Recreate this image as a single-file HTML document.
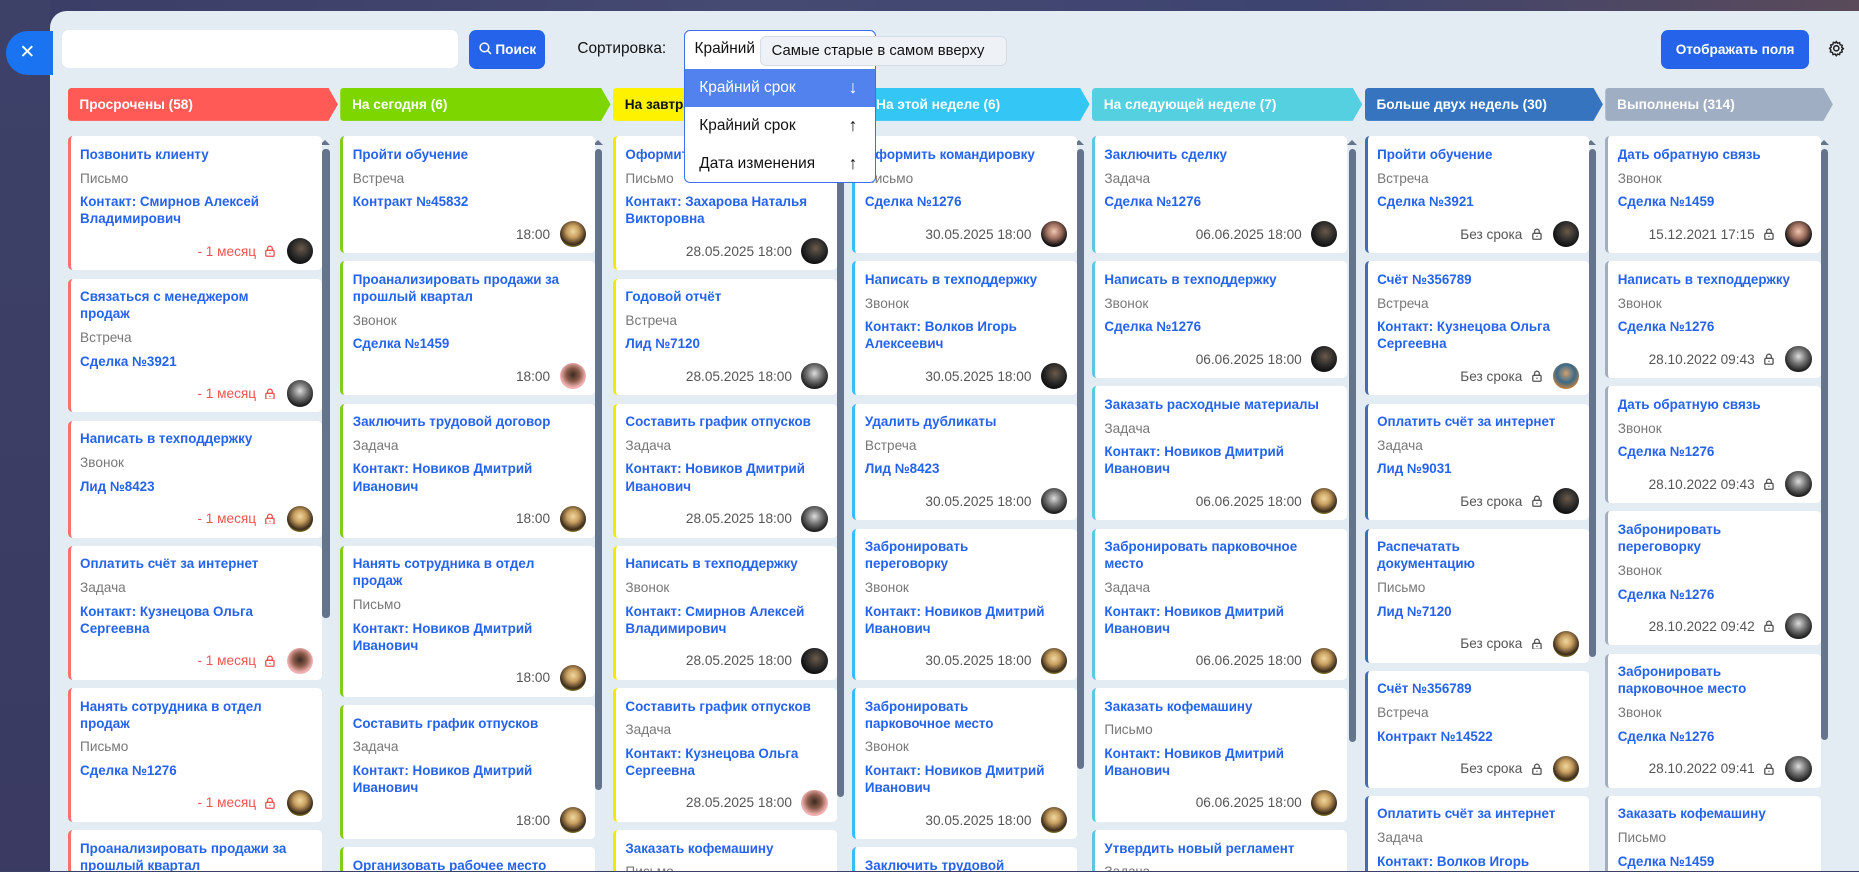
<!DOCTYPE html>
<html><head><meta charset="utf-8">
<style>
*{box-sizing:border-box;margin:0;padding:0}
html,body{width:1859px;height:872px;overflow:hidden;background:#3c4069}
body{font-family:"Liberation Sans","Noto Sans CJK SC",sans-serif}
.z{position:relative;width:1568px;height:735px;zoom:1.1856;overflow:hidden;background:linear-gradient(90deg,#3a3d66,#454a72 40%,#3d4470 70%,#5a4a5a)}
.lstrip{position:absolute;left:0;top:0;width:42px;height:735px;background:linear-gradient(180deg,#3d4168,#3a3a62)}
.panel{position:absolute;left:42px;top:9px;right:0;bottom:0;background:#e4ecf3;border-radius:14px 0 0 0;overflow:hidden}
.close{position:absolute;left:5px;top:26px;width:40px;height:37px;background:#1a73f0;border-radius:19px 0 0 19px;color:#fff;font-size:16px;line-height:37px;text-align:center;padding-right:4px;z-index:2}
.search{position:absolute;left:10px;top:16px;width:334px;height:32px;background:#fff;border-radius:6px}
.btn{position:absolute;height:33px;background:#2563eb;border-radius:6px;color:#fff;font-weight:bold;font-size:11.5px;line-height:33px;text-align:center}
.sortl{position:absolute;left:445px;top:25px;font-size:13px;color:#111}
.sel{position:absolute;left:535px;top:16px;width:162px;height:34px;background:#fff;border:1px solid #3b6ff0;border-radius:5px 5px 0 0;font-size:13px;line-height:31px;padding-left:8px;color:#111}
.tip{position:absolute;left:599px;top:21px;width:208px;height:26px;background:#eef2f7;border:1px solid #d5dce6;border-radius:5px;font-size:12.5px;line-height:24px;padding-left:9px;color:#111}
.dd{position:absolute;left:535px;top:49px;width:162px;height:96px;background:#fff;border:1px solid #3b6ff0;border-top:none;border-radius:0 0 5px 5px;z-index:5;overflow:hidden}
.dd div{height:32px;line-height:32px;padding-left:12px;font-size:13px;color:#111;position:relative}
.dd div span{position:absolute;right:15px;top:0;font-size:15px}
.dd .on{background:#5282ee;color:#fff}
.hd{position:absolute;top:65px;height:28px;font-size:11.5px;font-weight:bold;color:#fff;line-height:28px;padding-left:10px;clip-path:polygon(0 0,calc(100% - 8px) 0,100% 50%,calc(100% - 8px) 100%,0 100%);border-radius:3px}
.col{position:absolute;top:106px}
.c{background:#fff;border-radius:4px;border-left:3px solid;padding:8px 8px 5px 8px;margin-bottom:7px;font-size:11.5px}
.t,.l{color:#2563eb;font-weight:bold;line-height:14.5px;margin-bottom:5.5px;font-size:11.3px}
.ty{color:#777;line-height:15px;margin-bottom:5px}
.c>.l:last-child{margin-bottom:3px}
.f{height:22px;display:flex;justify-content:flex-end;align-items:center;color:#555;margin-top:9px;font-size:11.5px}
.f .lk{width:10px;height:10px;margin:0 9px 0 7px}
.av{width:22px;height:22px;border-radius:50%;margin-left:8px;background:radial-gradient(circle at 55% 40%,#6b5a4a 0,#2a2a2a 45%,#111 70%)}
.f .lk+.av{margin-left:0}
.a2{background:radial-gradient(circle at 50% 40%,#f0d8a0 0,#c9a060 30%,#3a2a1a 65%,#d8d030 90%)}
.a3{background:radial-gradient(circle at 50% 45%,#3a2a20 0,#8a5a4a 35%,#f0b0b0 65%)}
.a4{background:radial-gradient(circle at 50% 40%,#ddd 0,#777 35%,#222 70%)}
.a5{background:radial-gradient(circle at 50% 40%,#d0a070 0,#3a6a8a 45%,#c08040 75%)}
.a6{background:radial-gradient(circle at 50% 40%,#f0c8b0 0,#a07060 35%,#111 70%)}
.red{color:#f05252}
.sb{position:absolute;width:6px;border-radius:3px;background:#64748b}
.ar{position:absolute;width:0;height:0;border-left:5px solid transparent;border-right:5px solid transparent;border-bottom:5px solid #64748b}
</style></head><body>
<div class="z">
<div class="lstrip"></div>
<div class="close">✕</div>
<div class="panel">
<div class="search"></div>
<div class="btn" style="left:354px;top:16px;width:64px"><svg width="11" height="11" viewBox="0 0 12 12" style="vertical-align:-1px"><circle cx="5" cy="5" r="4" fill="none" stroke="#fff" stroke-width="1.4"/><path d="M8 8l3 3" stroke="#fff" stroke-width="1.4"/></svg> Поиск</div>
<div class="sortl">Сортировка:</div>
<div class="sel">Крайний</div>
<div class="tip">Самые старые в самом вверху</div>
<div class="dd"><div class="on">Крайний срок<span>↓</span></div><div>Крайний срок<span>↑</span></div><div>Дата изменения<span>↑</span></div></div>
<div class="btn" style="left:1359px;top:16px;width:125px">Отображать поля</div>
<svg style="position:absolute;left:1500px;top:25px" width="14" height="14" viewBox="0 0 14 14"><circle cx="7" cy="7" r="2.2" fill="none" stroke="#222" stroke-width="1.3"/><path d="M7 1.2l1 1.6 1.8-.6.4 1.9 1.9.4-.6 1.8 1.6 1-1.6 1 .6 1.8-1.9.4-.4 1.9-1.8-.6-1 1.6-1-1.6-1.8.6-.4-1.9-1.9-.4.6-1.8L1.2 7l1.6-1-.6-1.8 1.9-.4.4-1.9 1.8.6z" fill="none" stroke="#222" stroke-width="1.2" stroke-linejoin="round"/></svg>

<div class="hd" style="left:15px;width:228px;background:#ff5a55">Просрочены (58)</div>
<div class="hd" style="left:245px;width:228px;background:#7ed600">На сегодня (6)</div>
<div class="hd" style="left:475px;width:200px;background:#fff200;color:#111">На завтра</div>
<div class="hd" style="left:677px;width:200px;background:#34c6f4;padding-left:20px">На этой неделе (6)</div>
<div class="hd" style="left:879px;width:228px;background:#55d0e0">На следующей неделе (7)</div>
<div class="hd" style="left:1109px;width:201px;background:#3674c0">Больше двух недель (30)</div>
<div class="hd" style="left:1312px;width:192px;background:#a0aec3">Выполнены (314)</div>

<div class="ar" style="left:228px;top:109px"></div><div class="sb" style="left:230px;top:117px;height:395px"></div>
<div class="ar" style="left:458px;top:109px"></div><div class="sb" style="left:460px;top:117px;height:540px"></div>
<div class="ar" style="left:662px;top:109px"></div><div class="sb" style="left:664px;top:117px;height:546px"></div>
<div class="ar" style="left:864px;top:109px"></div><div class="sb" style="left:866px;top:117px;height:523px"></div>
<div class="ar" style="left:1094px;top:109px"></div><div class="sb" style="left:1096px;top:117px;height:500px"></div>
<div class="ar" style="left:1296px;top:109px"></div><div class="sb" style="left:1298px;top:117px;height:428px"></div>
<div class="ar" style="left:1492px;top:109px"></div><div class="sb" style="left:1494px;top:117px;height:498px"></div>

<svg width="0" height="0" style="position:absolute"><defs><g id="lock"><rect x="1.5" y="4.5" width="7" height="5" rx="1" fill="none" stroke="currentColor" stroke-width="1.1"/><path d="M3 4.5V3a2 2 0 014 0v1.5" fill="none" stroke="currentColor" stroke-width="1.1"/><path d="M5 6.5v1" stroke="currentColor" stroke-width="1.1"/></g></defs></svg>

<div class="col" style="left:15px;width:215px">
<div class="c" style="border-color:#f87171"><div class="t">Позвонить клиенту</div><div class="ty">Письмо</div><div class="l">Контакт: Смирнов Алексей Владимирович</div><div class="f red">- 1 месяц<svg class="lk" viewBox="0 0 10 10"><use href="#lock"/></svg><div class="av"></div></div></div>
<div class="c" style="border-color:#f87171"><div class="t">Связаться с менеджером<br>продаж</div><div class="ty">Встреча</div><div class="l">Сделка №3921</div><div class="f red">- 1 месяц<svg class="lk" viewBox="0 0 10 10"><use href="#lock"/></svg><div class="av a4"></div></div></div>
<div class="c" style="border-color:#f87171"><div class="t">Написать в техподдержку</div><div class="ty">Звонок</div><div class="l">Лид №8423</div><div class="f red">- 1 месяц<svg class="lk" viewBox="0 0 10 10"><use href="#lock"/></svg><div class="av a2"></div></div></div>
<div class="c" style="border-color:#f87171"><div class="t">Оплатить счёт за интернет</div><div class="ty">Задача</div><div class="l">Контакт: Кузнецова Ольга Сергеевна</div><div class="f red">- 1 месяц<svg class="lk" viewBox="0 0 10 10"><use href="#lock"/></svg><div class="av a3"></div></div></div>
<div class="c" style="border-color:#f87171"><div class="t">Нанять сотрудника в отдел продаж</div><div class="ty">Письмо</div><div class="l">Сделка №1276</div><div class="f red">- 1 месяц<svg class="lk" viewBox="0 0 10 10"><use href="#lock"/></svg><div class="av a2"></div></div></div>
<div class="c" style="border-color:#f87171"><div class="t">Проанализировать продажи за прошлый квартал</div><div class="ty">Звонок</div><div class="l">Сделка №1459</div></div>
</div>

<div class="col" style="left:245px;width:215px">
<div class="c" style="border-color:#84cc16"><div class="t">Пройти обучение</div><div class="ty">Встреча</div><div class="l">Контракт №45832</div><div class="f">18:00<div class="av a2"></div></div></div>
<div class="c" style="border-color:#84cc16"><div class="t">Проанализировать продажи за прошлый квартал</div><div class="ty">Звонок</div><div class="l">Сделка №1459</div><div class="f">18:00<div class="av a3"></div></div></div>
<div class="c" style="border-color:#84cc16"><div class="t">Заключить трудовой договор</div><div class="ty">Задача</div><div class="l">Контакт: Новиков Дмитрий Иванович</div><div class="f">18:00<div class="av a2"></div></div></div>
<div class="c" style="border-color:#84cc16"><div class="t">Нанять сотрудника в отдел продаж</div><div class="ty">Письмо</div><div class="l">Контакт: Новиков Дмитрий Иванович</div><div class="f">18:00<div class="av a2"></div></div></div>
<div class="c" style="border-color:#84cc16"><div class="t">Составить график отпусков</div><div class="ty">Задача</div><div class="l">Контакт: Новиков Дмитрий Иванович</div><div class="f">18:00<div class="av a2"></div></div></div>
<div class="c" style="border-color:#84cc16"><div class="t">Организовать рабочее место</div><div class="ty">Задача</div><div class="l">Сделка №1276</div></div>
</div>

<div class="col" style="left:475px;width:189px">
<div class="c" style="border-color:#f5e800"><div class="t">Оформить командировку</div><div class="ty">Письмо</div><div class="l">Контакт: Захарова Наталья Викторовна</div><div class="f">28.05.2025 18:00<div class="av"></div></div></div>
<div class="c" style="border-color:#f5e800"><div class="t">Годовой отчёт</div><div class="ty">Встреча</div><div class="l">Лид №7120</div><div class="f">28.05.2025 18:00<div class="av a4"></div></div></div>
<div class="c" style="border-color:#f5e800"><div class="t">Составить график отпусков</div><div class="ty">Задача</div><div class="l">Контакт: Новиков Дмитрий Иванович</div><div class="f">28.05.2025 18:00<div class="av a4"></div></div></div>
<div class="c" style="border-color:#f5e800"><div class="t">Написать в техподдержку</div><div class="ty">Звонок</div><div class="l">Контакт: Смирнов Алексей Владимирович</div><div class="f">28.05.2025 18:00<div class="av"></div></div></div>
<div class="c" style="border-color:#f5e800"><div class="t">Составить график отпусков</div><div class="ty">Задача</div><div class="l">Контакт: Кузнецова Ольга Сергеевна</div><div class="f">28.05.2025 18:00<div class="av a3"></div></div></div>
<div class="c" style="border-color:#f5e800"><div class="t">Заказать кофемашину</div><div class="ty">Письмо</div><div class="l">Сделка №1276</div></div>
</div>

<div class="col" style="left:677px;width:189px">
<div class="c" style="border-color:#38bdf8"><div class="t">Оформить командировку</div><div class="ty">Письмо</div><div class="l">Сделка №1276</div><div class="f">30.05.2025 18:00<div class="av a6"></div></div></div>
<div class="c" style="border-color:#38bdf8"><div class="t">Написать в техподдержку</div><div class="ty">Звонок</div><div class="l">Контакт: Волков Игорь Алексеевич</div><div class="f">30.05.2025 18:00<div class="av"></div></div></div>
<div class="c" style="border-color:#38bdf8"><div class="t">Удалить дубликаты</div><div class="ty">Встреча</div><div class="l">Лид №8423</div><div class="f">30.05.2025 18:00<div class="av a4"></div></div></div>
<div class="c" style="border-color:#38bdf8"><div class="t">Забронировать<br>переговорку</div><div class="ty">Звонок</div><div class="l">Контакт: Новиков Дмитрий Иванович</div><div class="f">30.05.2025 18:00<div class="av a2"></div></div></div>
<div class="c" style="border-color:#38bdf8"><div class="t">Забронировать<br>парковочное место</div><div class="ty">Звонок</div><div class="l">Контакт: Новиков Дмитрий Иванович</div><div class="f">30.05.2025 18:00<div class="av a2"></div></div></div>
<div class="c" style="border-color:#38bdf8"><div class="t">Заключить трудовой<br>договор</div><div class="ty">Задача</div><div class="l">Сделка №1276</div></div>
</div>

<div class="col" style="left:879px;width:215px">
<div class="c" style="border-color:#5bc8dc"><div class="t">Заключить сделку</div><div class="ty">Задача</div><div class="l">Сделка №1276</div><div class="f">06.06.2025 18:00<div class="av"></div></div></div>
<div class="c" style="border-color:#5bc8dc"><div class="t">Написать в техподдержку</div><div class="ty">Звонок</div><div class="l">Сделка №1276</div><div class="f">06.06.2025 18:00<div class="av"></div></div></div>
<div class="c" style="border-color:#5bc8dc"><div class="t">Заказать расходные материалы</div><div class="ty">Задача</div><div class="l">Контакт: Новиков Дмитрий Иванович</div><div class="f">06.06.2025 18:00<div class="av a2"></div></div></div>
<div class="c" style="border-color:#5bc8dc"><div class="t">Забронировать парковочное<br>место</div><div class="ty">Задача</div><div class="l">Контакт: Новиков Дмитрий Иванович</div><div class="f">06.06.2025 18:00<div class="av a2"></div></div></div>
<div class="c" style="border-color:#5bc8dc"><div class="t">Заказать кофемашину</div><div class="ty">Письмо</div><div class="l">Контакт: Новиков Дмитрий Иванович</div><div class="f">06.06.2025 18:00<div class="av a2"></div></div></div>
<div class="c" style="border-color:#5bc8dc"><div class="t">Утвердить новый регламент</div><div class="ty">Задача</div><div class="l">Сделка №1276</div></div>
</div>

<div class="col" style="left:1109px;width:189px">
<div class="c" style="border-color:#3b6fb6"><div class="t">Пройти обучение</div><div class="ty">Встреча</div><div class="l">Сделка №3921</div><div class="f">Без срока<svg class="lk" viewBox="0 0 10 10"><use href="#lock"/></svg><div class="av"></div></div></div>
<div class="c" style="border-color:#3b6fb6"><div class="t">Счёт №356789</div><div class="ty">Встреча</div><div class="l">Контакт: Кузнецова Ольга Сергеевна</div><div class="f">Без срока<svg class="lk" viewBox="0 0 10 10"><use href="#lock"/></svg><div class="av a5"></div></div></div>
<div class="c" style="border-color:#3b6fb6"><div class="t">Оплатить счёт за интернет</div><div class="ty">Задача</div><div class="l">Лид №9031</div><div class="f">Без срока<svg class="lk" viewBox="0 0 10 10"><use href="#lock"/></svg><div class="av"></div></div></div>
<div class="c" style="border-color:#3b6fb6"><div class="t">Распечатать<br>документацию</div><div class="ty">Письмо</div><div class="l">Лид №7120</div><div class="f">Без срока<svg class="lk" viewBox="0 0 10 10"><use href="#lock"/></svg><div class="av a2"></div></div></div>
<div class="c" style="border-color:#3b6fb6"><div class="t">Счёт №356789</div><div class="ty">Встреча</div><div class="l">Контракт №14522</div><div class="f">Без срока<svg class="lk" viewBox="0 0 10 10"><use href="#lock"/></svg><div class="av a2"></div></div></div>
<div class="c" style="border-color:#3b6fb6"><div class="t">Оплатить счёт за интернет</div><div class="ty">Задача</div><div class="l">Контакт: Волков Игорь Алексеевич</div></div>
</div>

<div class="col" style="left:1312px;width:182px">
<div class="c" style="border-color:#a0aec0"><div class="t">Дать обратную связь</div><div class="ty">Звонок</div><div class="l">Сделка №1459</div><div class="f">15.12.2021 17:15<svg class="lk" viewBox="0 0 10 10"><use href="#lock"/></svg><div class="av a6"></div></div></div>
<div class="c" style="border-color:#a0aec0"><div class="t">Написать в техподдержку</div><div class="ty">Звонок</div><div class="l">Сделка №1276</div><div class="f">28.10.2022 09:43<svg class="lk" viewBox="0 0 10 10"><use href="#lock"/></svg><div class="av a4"></div></div></div>
<div class="c" style="border-color:#a0aec0"><div class="t">Дать обратную связь</div><div class="ty">Звонок</div><div class="l">Сделка №1276</div><div class="f">28.10.2022 09:43<svg class="lk" viewBox="0 0 10 10"><use href="#lock"/></svg><div class="av a4"></div></div></div>
<div class="c" style="border-color:#a0aec0"><div class="t">Забронировать<br>переговорку</div><div class="ty">Звонок</div><div class="l">Сделка №1276</div><div class="f">28.10.2022 09:42<svg class="lk" viewBox="0 0 10 10"><use href="#lock"/></svg><div class="av a4"></div></div></div>
<div class="c" style="border-color:#a0aec0"><div class="t">Забронировать<br>парковочное место</div><div class="ty">Звонок</div><div class="l">Сделка №1276</div><div class="f">28.10.2022 09:41<svg class="lk" viewBox="0 0 10 10"><use href="#lock"/></svg><div class="av a4"></div></div></div>
<div class="c" style="border-color:#a0aec0"><div class="t">Заказать кофемашину</div><div class="ty">Письмо</div><div class="l">Сделка №1459</div></div>
</div>
</div>
</div>
</body></html>
